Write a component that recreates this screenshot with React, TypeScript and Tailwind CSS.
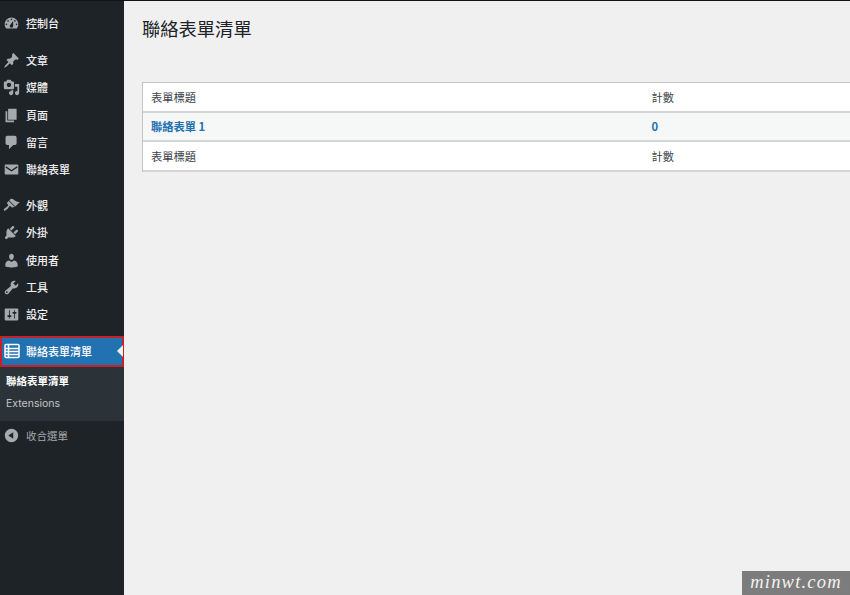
const cjk = "font-['Noto_Sans_CJK_TC','Noto_Sans_CJK_SC',sans-serif]";

const paths: Record<string, string> = {
  dashboard: "M3.76 16h12.48c1.1-1.37 1.76-3.11 1.76-5 0-4.42-3.58-8-8-8s-8 3.58-8 8c0 1.89.66 3.63 1.76 5zM10 4c.55 0 1 .45 1 1s-.45 1-1 1-1-.45-1-1 .45-1 1-1zM6 6c.55 0 1 .45 1 1s-.45 1-1 1-1-.45-1-1 .45-1 1-1zm8 0c.55 0 1 .45 1 1s-.45 1-1 1-1-.45-1-1 .45-1 1-1zm-5.370 5.550L12 7v6c0 1.100-.9 2-2 2s-2-.9-2-2c0-.57.240-1.080.630-1.450zM4 10c.55 0 1 .45 1 1s-.45 1-1 1-1-.45-1-1 .45-1 1-1zm12 0c.55 0 1 .45 1 1s-.45 1-1 1-1-.45-1-1 .45-1 1-1z",
  post: "M10.44 3.02l1.82-1.82 6.36 6.35-1.83 1.82c-1.05-.68-2.48-.57-3.41.36l-.75.75c-.92.93-1.04 2.35-.35 3.41l-1.83 1.82-2.41-2.41-2.8 2.79c-.42.42-3.38 2.71-3.8 2.29s1.86-3.39 2.28-3.81l2.79-2.79L4.1 9.36l1.83-1.82c1.05.69 2.48.57 3.4-.36l.75-.75c.93-.92 1.05-2.35.36-3.41z",
  media: "M13 11V4c0-.55-.45-1-1-1h-1.67L9 1H5L3.67 3H2c-.55 0-1 .45-1 1v7c0 .55.45 1 1 1h10c.55 0 1-.45 1-1zM7 4.500c1.380 0 2.500 1.120 2.500 2.500S8.380 9.500 7 9.500 4.500 8.380 4.500 7 5.620 4.500 7 4.500zM14 6h5v10.500c0 1.380-1.120 2.500-2.500 2.500S14 17.880 14 16.500s1.120-2.500 2.500-2.500c.170 0 .340.020.500.050V9h-3V6zm-4 8.050V13h2v3.500c0 1.380-1.120 2.500-2.500 2.500S7 17.880 7 16.500 8.120 14 9.500 14c.170 0 .340.020.500.050z",
  page: "M6 15V2h10v13H6zm-1 1h8v2H3V5h2v11z",
  comments: "M5 2h9c1.100 0 2 .9 2 2v7c0 1.100-.9 2-2 2h-2l-5 5v-5H5c-1.100 0-2-.9-2-2V4c0-1.100.9-2 2-2z",
  email: "M3 4h14c.6 0 1 .4 1 1v10c0 .6-.4 1-1 1H3c-.6 0-1-.4-1-1V5c0-.6.4-1 1-1zm.6 2.300l-.8 1.300L10 12.300l7.200-4.700-.8-1.300L10 10.500z",
  appearance: "M14.480 11.060L7.410 3.990l1.500-1.500c.5-.56 2.300-.47 3.510.32 1.210.8 1.430 1.280 2.910 2.100 1.180.64 2.450 1.260 4.450.85zm-.71.71L6.700 4.700 4.930 6.470c-.39.39-.39 1.020 0 1.410l1.060 1.060c.39.39.39 1.030 0 1.420-.6.6-1.430 1.110-2.210 1.690-.35.26-.7.53-1.010.84C1.430 13.230.4 14.960 1.200 15.780c.82.8 2.550-.22 3.850-1.570.31-.31.58-.66.84-1.010.58-.78 1.090-1.610 1.690-2.210.39-.39 1.030-.39 1.420 0l1.060 1.060c.39.39 1.020.39 1.410 0z",
  plugins: "M13.110 4.360L9.870 7.600 8 5.730l3.240-3.240c.35-.34 1.050-.2 1.560.32.52.51.66 1.210.31 1.550zm-8 1.770l.91-1.120 9.010 9.010-1.190.84c-.71.71-2.630 1.160-3.820 1.160H6.140L4.900 17.260c-.59.59-1.540.59-2.120 0-.59-.58-.59-1.530 0-2.120l1.240-1.240v-3.880c0-1.130.4-3.190 1.090-3.890zm7.260 3.970l3.240-3.240c.34-.35 1.040-.21 1.550.31.52.51.66 1.210.31 1.550l-3.240 3.250z",
  users: "M10 9.250c-2.270 0-2.730-3.440-2.730-3.440C7 4.020 7.820 2 9.970 2c2.160 0 2.980 2.020 2.710 3.810 0 0-.41 3.440-2.680 3.440zm0 2.570L12.720 10c2.390 0 4.520 2.330 4.520 4.530v2.490s-3.650 1.130-7.240 1.130c-3.650 0-7.240-1.130-7.240-1.130v-2.490c0-2.250 1.940-4.480 4.470-4.480z",
  tools: "M16.680 9.770c-1.340 1.340-3.300 1.670-4.950.99l-5.410 6.520c-.99.99-2.590.99-3.580 0s-.99-2.590 0-3.570l6.520-5.420c-.68-1.650-.35-3.610.99-4.950 1.280-1.280 3.120-1.620 4.720-1.060l-2.890 2.890 2.820 2.820 2.860-2.870c.53 1.580.18 3.390-1.080 4.650zM3.810 16.210c.4.39 1.040.39 1.430 0 .4-.4.4-1.040 0-1.430-.39-.4-1.030-.4-1.430 0-.39.39-.39 1.030 0 1.430z",
  settings: "M18 16V4c0-.55-.45-1-1-1H3c-.55 0-1 .45-1 1v12c0 .55.45 1 1 1h14c.55 0 1-.45 1-1zM8 11h1c.55 0 1 .45 1 1s-.45 1-1 1H8v1.500c0 .280-.22.5-.5.5s-.5-.22-.5-.5V13H6c-.55 0-1-.45-1-1s.45-1 1-1h1V5.500c0-.280.220-.5.5-.5s.5.220.5.500V11zm5-2h-1c-.55 0-1-.45-1-1s.45-1 1-1h1V5.500c0-.280.220-.5.5-.5s.5.220.5.500V7h1c.55 0 1 .45 1 1s-.45 1-1 1h-1v5.500c0 .280-.22.5-.5.5s-.5-.22-.5-.5V9z",
  collapse: "M10 2.160c4.330 0 7.840 3.510 7.840 7.840s-3.510 7.840-7.840 7.840S2.160 14.330 2.160 10 5.710 2.160 10 2.160zm2 11.720V6.120L6.180 9.970z",
};

function Icon({ name, className = "fill-[#a7aaad]" }: { name: string; className?: string }) {
  return (
    <svg viewBox="0 0 20 20" className={`w-[17px] h-[17px] shrink-0 ${className}`}>
      <path fillRule="evenodd" d={paths[name]} />
    </svg>
  );
}

function Item({ icon, label }: { icon: string; label: string }) {
  return (
    <div className="h-[27.3px] flex items-center pl-[3px] gap-[6px] text-[11px] font-medium text-[#f0f0f1]">
      <Icon name={icon} />
      <span>{label}</span>
    </div>
  );
}

function Row({ a, b, tone, link }: { a: string; b: string; tone: string; link?: boolean }) {
  const text = link ? "text-[#2271b1] font-semibold" : "text-[#3c434a]";
  return (
    <div className={`h-[29.5px] pt-px flex items-center border-b-2 border-[#d3d5d7] text-[11.25px] ${tone} ${text}`}>
      <span className="w-[508.500px] pl-[8px] shrink-0">{a}</span>
      <span>{b}</span>
    </div>
  );
}

export default function App() {
  return (
    <div className={`relative w-[850px] h-[595px] overflow-hidden flex bg-[#f0f0f1] border-t border-[#111417] ${cjk}`}>
      <aside className="w-[124px] h-full shrink-0 bg-[#1d2327] flex flex-col pt-[9px]">
        <Item icon="dashboard" label="控制台" />
        <div className="mt-[9.5px]">
          <Item icon="post" label="文章" />
          <Item icon="media" label="媒體" />
          <Item icon="page" label="頁面" />
          <Item icon="comments" label="留言" />
          <Item icon="email" label="聯絡表單" />
        </div>
        <div className="mt-[8.5px]">
          <Item icon="appearance" label="外觀" />
          <Item icon="plugins" label="外掛" />
          <Item icon="users" label="使用者" />
          <Item icon="tools" label="工具" />
          <Item icon="settings" label="設定" />
        </div>
        <div className="relative mt-[7.500px] h-[31px] bg-[#2271b1] border-2 border-[#c4222a] flex items-center pl-[2px] gap-[6px] text-[11px] font-medium text-white">
          <svg viewBox="0 0 16 16" className="w-[16px] h-[16px] shrink-0" fill="none" stroke="#fff" strokeWidth="1.5">
            <rect x="1" y="1.500" width="14" height="13" rx="1" />
            <path d="M1 5.500h14M1 8.500h14M1 11.500h14M4.500 2v12" />
          </svg>
          <span>聯絡表單清單</span>
          <div className="absolute right-[-1px] top-[7px] w-0 h-0 border-y-[6px] border-y-transparent border-r-[6px] border-r-[#f0f0f1]" />
        </div>
        <div className="h-[54px] bg-[#2c3338] flex flex-col pt-[3px] pl-[6px] text-[10.5px]">
          <div className="h-[22px] flex items-center text-white font-semibold">聯絡表單清單</div>
          <div className="h-[24px] flex items-center text-[10.5px] text-[#c3c4c7] font-['Inter',sans-serif]">Extensions</div>
        </div>
        <div className="h-[30px] flex items-center pl-[3px] gap-[6px] text-[10.5px] text-[#a7aaad]">
          <Icon name="collapse" />
          <span>收合選單</span>
        </div>
      </aside>
      <main className="flex-1 min-w-0 pl-[18px]">
        <h1 className="text-[18.3px] leading-[24px] mt-[15px] text-[#1d2327] font-normal">聯絡表單清單</h1>
        <div className="mt-[42px] w-[760px] border-l border-t border-[#c3c4c7]">
          <Row a="表單標題" b="計數" tone="bg-white" />
          <Row a="聯絡表單 1" b="0" tone="bg-[#f6f7f7]" link />
          <Row a="表單標題" b="計數" tone="bg-white" />
        </div>
      </main>
      <div className="absolute right-0 bottom-0 w-[108px] h-[24px] bg-[#7c7c7c] flex items-center justify-center text-[#f2f2f2] italic text-[18.5px] tracking-[1.2px] font-['Liberation_Serif',serif]">
        minwt.com
      </div>
    </div>
  );
}
